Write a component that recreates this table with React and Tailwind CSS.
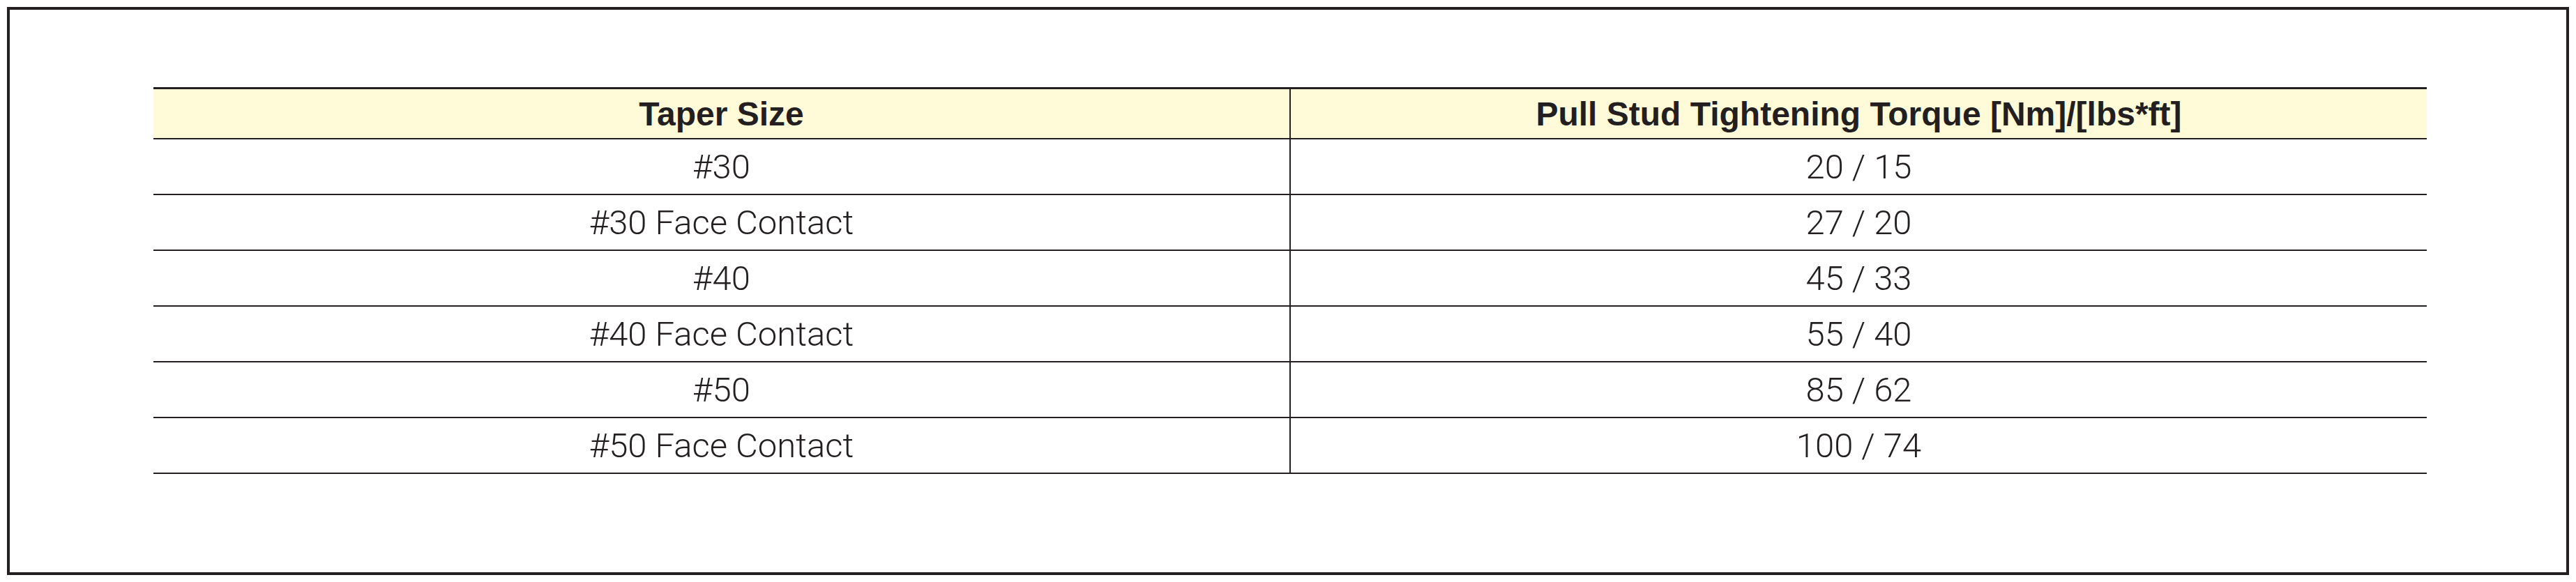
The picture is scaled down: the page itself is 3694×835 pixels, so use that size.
export default function App() {
  const rows = [
    ["#30", "20 / 15"],
    ["#30 Face Contact", "27 / 20"],
    ["#40", "45 / 33"],
    ["#40 Face Contact", "55 / 40"],
    ["#50", "85 / 62"],
    ["#50 Face Contact", "100 / 74"],
  ];
  return (
    <div className="w-[3694px] h-[835px] bg-white p-[10px]">
      <div className="w-full h-full border-4 border-[#231f20] pt-[111px] pl-[206px]">
        <div className="w-[3260px] text-[#231f20]">
          <div className="grid grid-cols-[1631px_1fr] h-[75px] bg-[#fffad7] border-t-[3px] border-b-2 border-[#231f20] font-['Liberation_Sans',Arial,sans-serif] font-bold text-[48px] leading-none">
            <div className="flex items-center justify-center border-r-2 border-[#231f20] pt-[2px]">Taper Size</div>
            <div className="flex items-center justify-center pt-[2px]">Pull Stud Tightening Torque [Nm]/[lbs*ft]</div>
          </div>
          {rows.map(([a, b]) => (
            <div key={a} className="grid grid-cols-[1631px_1fr] h-[80px] border-b-2 border-[#231f20] font-['Roboto',sans-serif] font-light text-[49px] leading-none">
              <div className="flex items-center justify-center border-r-2 border-[#231f20]">{a}</div>
              <div className="flex items-center justify-center">{b}</div>
            </div>
          ))}
        </div>
      </div>
    </div>
  );
}
